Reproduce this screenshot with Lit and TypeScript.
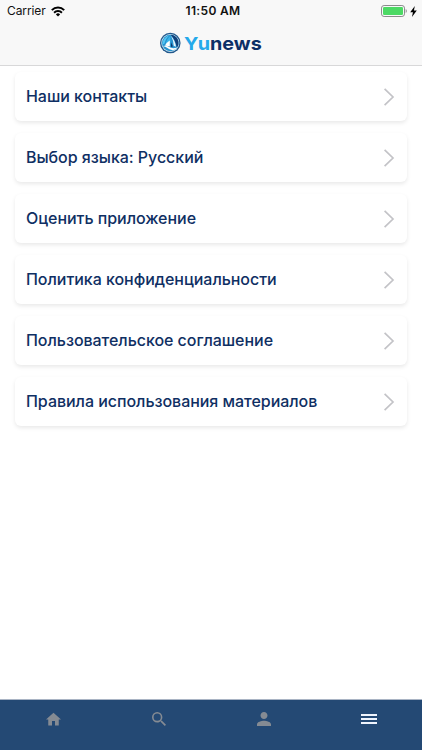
import { LitElement, html, css, svg } from "lit";
import { customElement } from "lit/decorators.js";

const ROWS = [
  "Наши контакты",
  "Выбор языка: Русский",
  "Оценить приложение",
  "Политика конфиденциальности",
  "Пользовательское соглашение",
  "Правила использования материалов",
];

const TABS = [
  { name: "home", box: "2 3 20 17", w: 15, h: 14, shape: svg`<path d="M10 20v-6h4v6h5v-8h3L12 3 2 12h3v8z"/>` },
  {
    name: "search",
    box: "3 3 17.5 17.5",
    w: 14,
    h: 14,
    shape: svg`<path d="M15.5 14h-.79l-.28-.27A6.47 6.47 0 0 0 16 9.5 6.5 6.5 0 1 0 9.5 16c1.61 0 3.09-.59 4.23-1.57l.27.28v.79l5 4.99L20.49 19l-4.99-5zm-6 0a4.5 4.5 0 1 1 0-9 4.5 4.5 0 0 1 0 9z"/>`,
  },
  {
    name: "profile",
    box: "4 4 16 16",
    w: 14,
    h: 14,
    shape: svg`<path d="M12 12c2.21 0 4-1.79 4-4s-1.79-4-4-4-4 1.79-4 4 1.79 4 4 4zm0 2c-2.67 0-8 1.34-8 4v2h16v-2c0-2.66-5.33-4-8-4z"/>`,
  },
  { name: "menu", box: "0 0 16 10", w: 16, h: 10, shape: svg`<path d="M0 0h16v2H0zM0 4h16v2H0zM0 8h16v2H0z"/>` },
];

@customElement("app-root")
export class AppRoot extends LitElement {
  static styles = css`
    :host {
      display: flex;
      flex-direction: column;
      height: 100vh;
      overflow: hidden;
      background: #fff;
      font-family: Inter, "Liberation Sans", sans-serif;
    }
    svg {
      display: block;
      flex: none;
    }
    header {
      flex: none;
      box-sizing: border-box;
      height: 66px;
      background: #f8f8f8;
      border-bottom: 1px solid #d8d8d9;
    }
    .status {
      display: grid;
      grid-template-columns: 1fr auto 1fr;
      align-items: center;
      height: 22px;
      padding: 0 5px 0 7px;
      font-size: 12px;
      line-height: 22px;
      color: #111;
    }
    .carrier {
      display: flex;
      align-items: center;
      gap: 5px;
      letter-spacing: -0.1px;
    }
    .time {
      padding-left: 2px;
      font-weight: 600;
      letter-spacing: 0.35px;
    }
    .power {
      display: flex;
      justify-content: flex-end;
      align-items: center;
      gap: 3px;
    }
    .brand {
      display: flex;
      align-items: center;
      height: 42px;
      padding-left: 159px;
      gap: 3px;
    }
    .word {
      padding-top: 1px;
      font-size: 18px;
      line-height: 22px;
      font-weight: 700;
      color: #0c2f66;
      transform-origin: 0 50%;
      transform: scaleX(1.1);
    }
    .yu {
      color: #25a9ea;
    }
    main {
      flex: 1;
      display: flex;
      flex-direction: column;
      gap: 12px;
      padding: 6px 15px 0;
    }
    .row {
      display: flex;
      align-items: center;
      justify-content: space-between;
      box-sizing: border-box;
      height: 49px;
      padding: 0 12px 0 11px;
      border-radius: 6px;
      background: #fff;
      box-shadow: 0 2px 4px rgba(0, 0, 0, 0.09);
      font-size: 16px;
      font-weight: 500;
      letter-spacing: -0.04px;
      color: #0f2f63;
      white-space: nowrap;
    }
    .label {
      padding-bottom: 2px;
    }
    nav {
      flex: none;
      display: grid;
      grid-template-columns: repeat(4, 1fr);
      box-sizing: border-box;
      height: 51px;
      padding: 0 0 12px 1px;
      border-top: 1px solid #a9b4c4;
      background: #244974;
    }
    .tab {
      display: flex;
      justify-content: center;
      align-items: center;
      fill: #858b93;
    }
    .menu {
      fill: #eff4fd;
    }
  `;

  render() {
    return html`
      <header>
        <div class="status">
          <div class="carrier">
            <span>Carrier</span>
            <svg width="14" height="11" viewBox="0 0 14 11" fill="none" stroke="#000" stroke-width="2">
              <path d="M.8 4.1a8.8 8.8 0 0 1 12.4 0" />
              <path d="M3.1 6.7a5.5 5.5 0 0 1 7.8 0" />
              <path d="M7 10.5 4.9 8.4a3 3 0 0 1 4.2 0z" fill="#000" stroke="none" />
            </svg>
          </div>
          <span class="time">11:50 AM</span>
          <div class="power">
            <svg width="26" height="12" viewBox="0 0 26 12">
              <rect x=".5" y=".5" width="23" height="11" rx="2.6" fill="none" stroke="#8b8b8c" />
              <rect x="2" y="2" width="20" height="8" rx="1.2" fill="#4cd964" />
              <path d="M24.7 4v4q1.1-.6 1.1-2t-1.1-2z" fill="#8b8b8c" />
            </svg>
            <svg width="7" height="11" viewBox="0 0 6 10"><path d="M4.2 0 0 5.6h2.5L1.6 10 6 4.1H3.4z" /></svg>
          </div>
        </div>
        <div class="brand">
          <svg width="22" height="22" viewBox="0 0 22 22">
            <circle cx="11.3" cy="11" r="10.3" fill="#22598d" />
            <circle cx="11.3" cy="11" r="9" fill="#d5ebf5" />
            <circle cx="11.3" cy="11" r="8.3" fill="#2793cf" />
            <path d="M11.6 2.7A8.3 8.3 0 0 1 19.4 13l-1.6 2.6Q16.6 8 11.6 2.7z" fill="#123f78" />
            <path d="M10.6 2.9Q4 5.2 3.2 12.4l2.2-.6Q6.4 6.6 10.6 2.9z" fill="#52c4f2" />
            <path d="M11.4 3.6Q7.6 7.2 6.6 11.6l4.8-.9z" fill="#38b4ea" />
            <path d="M12 3.8q4.2 5 5 11l-2.3-1.1Q14.5 8.600 12 3.800z" fill="#e9f6fc" />
            <path d="M10.8 8.400Q7.600 10.200 5.900 13.600l4.900 1z" fill="#fff" />
            <path d="M12 10.200l1.900 4.400-1.900.4z" fill="#0f376c" />
            <path d="M3.600 14q4-.9 6.500 1.100 3 1.900 8.100.5-2.100 2.800-5.300 2.500-2.700-.3-4.500-2-1.800-1.500-4.800-2.100z" fill="#fff" />
          </svg>
          <span class="word"><span class="yu">Yu</span>news</span>
        </div>
      </header>
      <main>
        ${ROWS.map(
          (label) => html`
            <div class="row">
              <span class="label">${label}</span>
              <svg width="11" height="18" viewBox="0 0 11 18" fill="none" stroke="#c3c3c7" stroke-width="1.7">
                <path d="M.6.8 9 9 .6 17.2" />
              </svg>
            </div>
          `,
        )}
      </main>
      <nav>
        ${TABS.map(
          (tab) => html`
            <div class="tab ${tab.name}">
              <svg width="${tab.w}" height="${tab.h}" viewBox="${tab.box}">${tab.shape}</svg>
            </div>
          `,
        )}
      </nav>
    `;
  }
}
